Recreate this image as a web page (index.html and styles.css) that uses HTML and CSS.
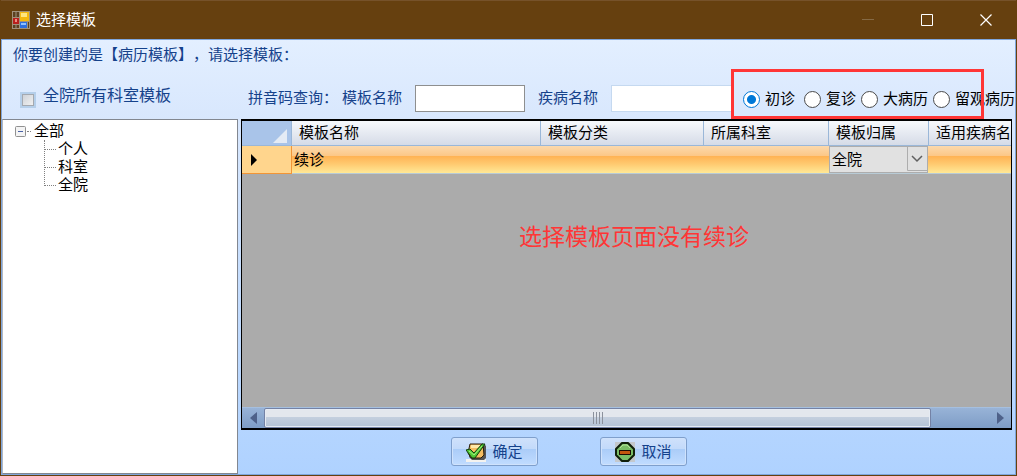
FILE: index.html
```html
<!DOCTYPE html>
<html lang="zh-CN">
<head>
	<meta charset="utf-8">
	<title>选择模板</title>
	<link rel="stylesheet" href="styles.css">
</head>
<body>
<div class="window">
	<header class="titlebar">
		<svg class="appIcon" width="18" height="18" viewBox="0 0 18 18">
			<rect width="18" height="18" fill="#a0917c"/>
			<path d="M1 1h6v5H1zM1 14h6v3H1zM16 11h1v6h-1z" fill="#5b4020"/>
			<path d="M4 1v5M4 14v3" stroke="#a0917c"/>
			<rect x="1" y="7" width="6" height="6" fill="#b8201c"/>
			<rect x="3" y="8" width="2" height="3" fill="#f08a80"/>
			<rect x="8" y="1" width="9" height="9" fill="#f5b90f"/>
			<rect x="9" y="2" width="6" height="4" fill="#ffe580"/>
			<rect x="8" y="11" width="7" height="6" fill="#2d6fe0"/>
			<rect x="9" y="12" width="5" height="2" fill="#8fc0ff"/>
		</svg>
		<h1>选择模板</h1>
		<div class="winButtons">
			<button type="button" aria-label="最小化" disabled><svg width="12" height="12"><path d="M0 5.500h12" stroke="#856a45"/></svg></button>
			<button type="button" aria-label="最大化"><svg width="12" height="12"><path d="M.5.500h11v11H.5z" fill="none" stroke="#fff"/></svg></button>
			<button type="button" aria-label="关闭"><svg width="12" height="12"><path d="M.5.500l11 11M11.500.500l-11 11" stroke="#fff" stroke-width="1.200"/></svg></button>
		</div>
	</header>

	<main class="client">
		<p class="prompt">你要创建的是【病历模板】，请选择模板：</p>

		<div class="toolbar">
			<label class="allDept"><input type="checkbox"><span>全院所有科室模板</span></label>
			<div class="query">
				<span class="queryTitle">拼音码查询：</span>
				<label for="tplName">模板名称</label>
				<input type="text" id="tplName" class="tplName">
				<label for="illName">疾病名称</label>
				<input type="text" id="illName" class="illName">
			</div>
			<div class="visitTypes">
				<label><input type="radio" name="visit" checked>初诊</label>
				<label><input type="radio" name="visit">复诊</label>
				<label class="tight"><input type="radio" name="visit">大病历</label>
				<label class="tight"><input type="radio" name="visit">留观病历</label>
				<div class="redBox"></div>
			</div>
		</div>

		<div class="panes">
			<nav class="tree">
				<div class="treeRoot">
					<button type="button" class="treeToggle" aria-label="折叠"><svg width="11" height="11"><rect x=".5" y=".5" width="10" height="10" rx="1" fill="#f4f4f4" stroke="#919191"/><path d="M3 5.500h5" stroke="#4b63a7"/></svg></button>
					<span>全部</span>
				</div>
				<ul>
					<li>个人</li>
					<li>科室</li>
					<li>全院</li>
				</ul>
			</nav>

			<section class="right">
				<div class="gridBox">
					<table class="grid">
						<colgroup>
							<col class="colMark"><col><col class="colKind"><col class="colDept"><col class="colOwner"><col class="colIll">
						</colgroup>
						<thead>
							<tr>
								<th class="corner"><svg width="14" height="14"><path d="M14 0v14H0z" fill="#e4ebf5"/></svg></th>
								<th>模板名称</th>
								<th>模板分类</th>
								<th>所属科室</th>
								<th>模板归属</th>
								<th>适用疾病名</th>
							</tr>
						</thead>
						<tbody>
							<tr>
								<td class="marker"><svg width="6" height="12"><path d="M0 0l6 6-6 6z" fill="#000"/></svg></td>
								<td>续诊</td>
								<td></td>
								<td></td>
								<td class="owner">
									<div class="selectBox">
										<select aria-label="模板归属"><option>全院</option></select>
										<svg width="20" height="24"><path d="M.5 0v23.500H20" fill="none" stroke="#adadad"/><path d="M5 9l5 5 5-5" fill="none" stroke="#606060" stroke-width="1.500"/></svg>
									</div>
								</td>
								<td></td>
							</tr>
						</tbody>
					</table>
					<p class="note">选择模板页面没有续诊</p>
					<div class="scrollbar">
						<button type="button" aria-label="向左"><svg width="7" height="12"><path d="M7 0v12L0 6z" fill="#4e6189"/></svg></button>
						<div class="track">
							<div class="thumb"><svg width="10" height="12"><path d="M.5 0v12M3.500 0v12M6.500 0v12M9.500 0v12" stroke="#8b919c"/></svg></div>
						</div>
						<button type="button" aria-label="向右"><svg width="7" height="12"><path d="M0 0v12l7-6z" fill="#4e6189"/></svg></button>
					</div>
				</div>

				<div class="okCancel">
					<button type="button">
						<svg width="20" height="20" viewBox="0 0 20 20">
							<path d="M0 17h20v3H0z" fill="#f4f2ee"/>
							<path d="M5 2h13l2 2v12l-2 2H6l-3-3z" fill="#555"/>
							<path d="M4 2h13l1 11-3 3H5L2 11z" fill="#f4bd62" stroke="#281b0a"/>
							<path d="M5 3h10v3H5z" fill="#ffe9a8"/>
							<path d="M0 8l4-1 4 4 8-9h3L9 16H6z" fill="#50c736" stroke="#123d0c"/>
							<path d="M3 9l5 4 8-9" fill="none" stroke="#a6f080"/>
						</svg>
						确定
					</button>
					<button type="button">
						<svg width="20" height="20" viewBox="0 0 20 20">
							<path d="M0 0h20v20H0z" fill="#c4c8cc"/>
							<path d="M7 1h6l6 6v6l-6 6H7l-6-6V7z" fill="#79bd66" stroke="#10200c" stroke-width="2" stroke-linejoin="round"/>
							<path d="M5 6l3-3h4l3 3" fill="none" stroke="#b2e39c"/>
							<rect x="4.500" y="8.500" width="11" height="4" fill="#c4560f" stroke="#1c0d04"/>
						</svg>
						取消
					</button>
				</div>
			</section>
		</div>
	</main>
</div>
</body>
</html>
```

FILE: styles.css
```css
* {box-sizing: border-box;}

body {
	margin: 0;
	font-family: "Liberation Sans", "Noto Sans CJK SC", sans-serif;
	font-size: 15px;
	line-height: 20px;
	color: #000;
	text-spacing-trim: space-all;
}

button, input, select {font: inherit;}
button {padding: 0;border: 0;background: none;}
svg {display: block;flex: none;}
p {margin: 0;}

.window {
	display: flex;
	flex-direction: column;
	min-height: 100vh;
	padding: 0 1px 1px;
	background: #66400f;
}

/* title bar */
.titlebar {
	display: flex;
	align-items: center;
	height: 39px;
	padding: 0 1px 0 11px;
	border-top: 1px solid #76522a;
	color: #fff;
}
.titlebar h1 {flex: 1;margin: 0 0 0 6px;font-size: 15px;font-weight: normal;}
.winButtons {display: flex;}
.winButtons button {display: flex;align-items: center;justify-content: center;width: 59px;height: 36px;}

.client {
	flex: 1;
	display: flex;
	flex-direction: column;
	border: 1px solid #7fa6dc;
	background: linear-gradient(#e3efff 0, #d8e7fd 80px, #afd2ff 100%);
}
.prompt {height: 40px;padding: 5px 11px;color: #15428b;}

/* filter row */
.toolbar {display: flex;height: 39px;color: #15428b;white-space: nowrap;}
.toolbar label {display: flex;align-items: center;}
.allDept {flex: none;width: 246px;padding-left: 18px;font-size: 16px;}
.allDept span {padding-bottom: 8px;}
.allDept input {
	appearance: none;
	width: 16px;
	height: 16px;
	margin: 0 7px 0 0;
	border: 2px solid #b5cfea;
	outline: 1px solid #a4a9b0;
	outline-offset: -3px;
	background: linear-gradient(135deg, #cbcfd5, #f4f4f4);
}
.query {display: flex;align-items: center;height: 36px;flex: 1;min-width: 0;}
.query label, .queryTitle {flex: none;}
.queryTitle {width: 94px;}
.query input {min-width: 0;padding: 2px 4px;background: #fff;}
.tplName {flex: none;width: 110px;height: 27px;margin: 0 13px;border: 1px solid #8e8f8f;}
.illName {flex: 1;height: 27px;margin-left: 13px;border: 1px solid #c5d9f0;}

.visitTypes {position: relative;flex: none;display: flex;height: 38px;margin-left: 8px;color: #000;}
.visitTypes label {margin-left: 9px;}
.visitTypes label:first-child {margin-left: 3px;}
.visitTypes label.tight {margin-left: 5px;}
.visitTypes input {
	appearance: none;
	width: 17px;
	height: 17px;
	margin: 0 5px 0 0;
	border: 1px solid #4a4a4a;
	border-radius: 50%;
	background: #fff;
}
.visitTypes input:checked {border-color: #0078d7;background: radial-gradient(circle, #0078d7 4px, #fff 5px);}
.redBox {
	position: absolute;
	left: -9px;
	top: -11px;
	right: 31px;
	height: 50px;
	border: 3px solid #ff3636;
	pointer-events: none;
}

.panes {flex: 1;display: flex;gap: 3px;}

/* left tree */
.tree {
	width: 236px;
	padding: 2px 12px;
	border: 1px solid #828790;
	border-left-color: #b0b8c4;
	background: #fff;
	line-height: 18px;
}
.treeRoot {display: flex;align-items: center;}
.treeRoot::after {order: 1;content: "";width: 4px;margin: 0 3px 0 1px;border-top: 1px dotted #808080;}
.treeRoot span {order: 2;}
.tree ul {margin: 0;padding: 0 0 0 29px;list-style: none;}
.tree li {position: relative;padding-left: 14px;}
.tree li::before {
	content: "";
	position: absolute;
	left: 0;
	top: -9px;
	width: 11px;
	height: 18px;
	border-left: 1px dotted #808080;
	border-bottom: 1px dotted #808080;
}
.tree li:first-child::before {top: 0;height: 9px;}

/* template list */
.right {flex: 1;min-width: 0;display: flex;flex-direction: column;padding-right: 3px;}
.gridBox {
	flex: 1;
	display: flex;
	flex-direction: column;
	border: 1px solid #000;
	border-top-width: 2px;
	border-bottom-width: 2px;
	background: #ababab;
}
.grid {width: 100%;table-layout: fixed;border-collapse: separate;border-spacing: 0;}
.colMark {width: 50px;}
.colKind {width: 163px;}
.colDept {width: 125px;}
.colOwner {width: 100px;}
.colIll {width: 82px;}
.grid th {
	height: 25px;
	padding: 0 0 0 7px;
	border-right: 1px solid #9ab7d8;
	border-bottom: 1px solid #9ab7d8;
	background: linear-gradient(#f7f9fc, #d5dbe7);
	font-weight: normal;
	text-align: left;
	white-space: nowrap;
}
.grid th:last-child {border-right: 0;}
.grid th.corner {padding: 5px 4px 0 0;background: #a9c4e9;}
.corner svg {margin-left: auto;}
.grid td {
	height: 28px;
	padding: 0 2px;
	border-bottom: 1px solid #b8cbd6;
	background: linear-gradient(#fcd9ac 0, #fcc786 10px, #ffb253 10px, #ffca70 18px, #ffe896 100%);
}
.grid td.marker {padding-left: 9px;border-right: 1px solid #f29536;border-bottom-color: #f29536;background: #ffd58d;}
.grid td.owner {padding: 0 1px 0 0;}
.selectBox {position: relative;}
.selectBox select {
	appearance: none;
	display: block;
	width: 100%;
	height: 27px;
	padding: 0 22px 0 2px;
	border: 1px solid #adadad;
	border-radius: 0;
	background: #e1e1e1;
	color: #000;
}
.selectBox svg {position: absolute;right: 1px;top: 1px;pointer-events: none;}
.note {flex: 1;padding-top: 48px;padding-right: 6px;margin-left: 21px;color: #ff3636;font-size: 23px;line-height: 30px;text-align: center;}

.scrollbar {
	display: flex;
	height: 21px;
	border-top: 1px solid #a5bfdf;
	background: linear-gradient(#98b3d7, #7e9dc6);
}
.scrollbar button {display: flex;align-items: center;justify-content: center;width: 22px;}
.track {flex: 1;}
.thumb {
	display: flex;
	align-items: center;
	justify-content: center;
	width: 92%;
	height: 20px;
	border: 1px solid #7482a5;
	border-radius: 2px;
	box-shadow: inset 0 0 0 1px #e5ebf3;
	background: linear-gradient(#e3e7ed 45%, #c4cfde 45%, #b4c3d6);
}

.okCancel {display: flex;gap: 62px;height: 44px;padding: 7px 0 0 210px;}
.okCancel button {
	display: flex;
	align-items: center;
	justify-content: center;
	gap: 6px;
	width: 87px;
	height: 29px;
	border: 1px solid #7f9fcc;
	border-radius: 3px;
	background: linear-gradient(#cfe1fb 0, #c3dafa 40%, #aaccf8 40%, #c1dcff 100%);
	box-shadow: inset 0 0 0 1px #cfe2fc;
	color: #15428b;
}
```
